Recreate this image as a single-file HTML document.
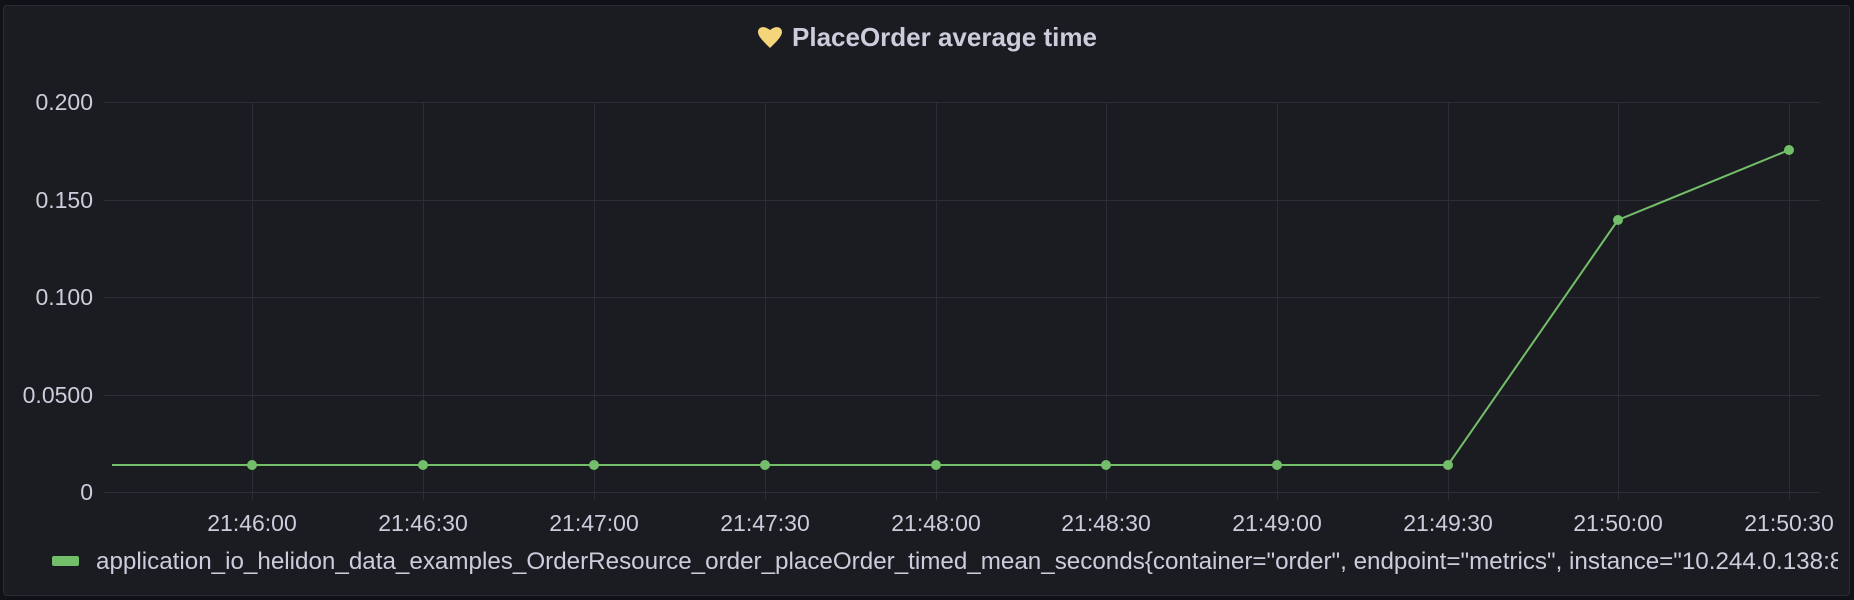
<!DOCTYPE html>
<html><head><meta charset="utf-8"><style>
html,body{margin:0;padding:0;background:#111217;width:1854px;height:600px;overflow:hidden}
.panel{position:absolute;left:3px;top:5px;width:1847px;height:591px;background:#1b1c21;border:1px solid #2a2c33;border-radius:4px;box-sizing:border-box}
svg{position:absolute;left:0;top:0}
text{font-family:"Liberation Sans",sans-serif;fill:#ccccdc}
</style></head><body>
<div class="panel"></div>
<svg width="1854" height="600">
<g stroke="#2c2e35" stroke-width="1">
<line x1="104" y1="102.5" x2="1820" y2="102.5"/>
<line x1="104" y1="200.5" x2="1820" y2="200.5"/>
<line x1="104" y1="297.5" x2="1820" y2="297.5"/>
<line x1="104" y1="395.5" x2="1820" y2="395.5"/>
<line x1="104" y1="492.5" x2="1820" y2="492.5"/>
<line x1="252.5" y1="102" x2="252.5" y2="500"/>
<line x1="423.5" y1="102" x2="423.5" y2="500"/>
<line x1="594.5" y1="102" x2="594.5" y2="500"/>
<line x1="765.5" y1="102" x2="765.5" y2="500"/>
<line x1="936.5" y1="102" x2="936.5" y2="500"/>
<line x1="1106.5" y1="102" x2="1106.5" y2="500"/>
<line x1="1277.5" y1="102" x2="1277.5" y2="500"/>
<line x1="1448.5" y1="102" x2="1448.5" y2="500"/>
<line x1="1618.5" y1="102" x2="1618.5" y2="500"/>
<line x1="1789.5" y1="102" x2="1789.5" y2="500"/>
</g>
<polyline fill="none" stroke="#73bf69" stroke-width="2" points="112,465 1448,465 1618,220 1789,150"/>
<g fill="#73bf69">
<circle cx="252" cy="465" r="5"/><circle cx="423" cy="465" r="5"/><circle cx="594" cy="465" r="5"/><circle cx="765" cy="465" r="5"/><circle cx="936" cy="465" r="5"/><circle cx="1106" cy="465" r="5"/><circle cx="1277" cy="465" r="5"/><circle cx="1448" cy="465" r="5"/><circle cx="1618" cy="220" r="5"/><circle cx="1789" cy="150" r="5"/>
</g>
<g font-size="23" text-anchor="end">
<text x="93" y="110">0.200</text>
<text x="93" y="208">0.150</text>
<text x="93" y="305">0.100</text>
<text x="93" y="403">0.0500</text>
<text x="93" y="500">0</text>
</g>
<g font-size="23" text-anchor="middle">
<text x="252" y="531">21:46:00</text><text x="423" y="531">21:46:30</text><text x="594" y="531">21:47:00</text><text x="765" y="531">21:47:30</text><text x="936" y="531">21:48:00</text><text x="1106" y="531">21:48:30</text><text x="1277" y="531">21:49:00</text><text x="1448" y="531">21:49:30</text><text x="1618" y="531">21:50:00</text><text x="1789" y="531">21:50:30</text>
</g>
<path d="M770 48 C766 44 758 37 758 32 C758 27 764 25 770 30 C776 25 782 27 782 32 C782 37 774 44 770 48Z" fill="#f5d57a"/>
<text x="792" y="46" font-size="26" font-weight="bold" style="fill:#ccccdc">PlaceOrder average time</text>
<rect x="52" y="556" width="27" height="10" rx="2" fill="#73bf69"/>
<svg x="0" y="0" width="1838" height="600"><text x="96" y="569" font-size="24.2">application_io_helidon_data_examples_OrderResource_order_placeOrder_timed_mean_seconds{container="order", endpoint="metrics", instance="10.244.0.138:8080"}</text></svg>
</svg>
</body></html>
